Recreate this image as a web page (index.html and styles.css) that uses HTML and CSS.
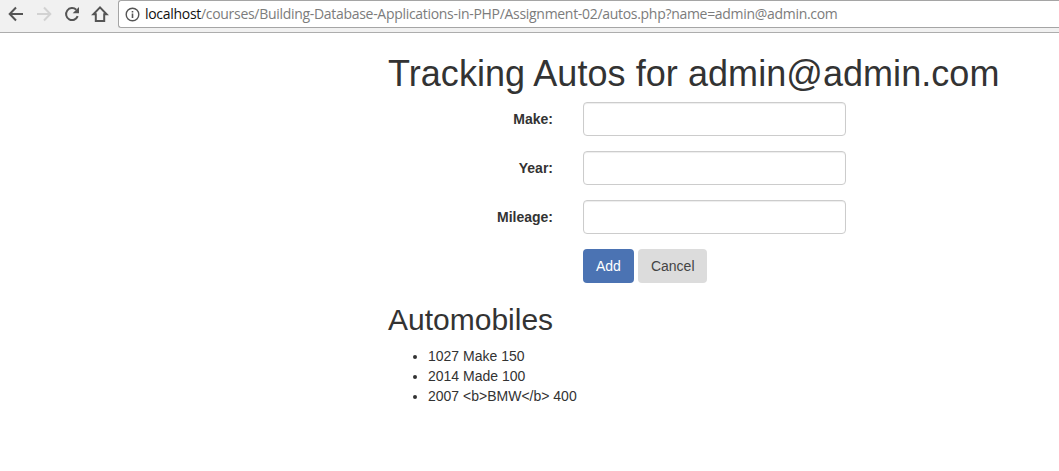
FILE: index.html
```html
<!DOCTYPE html>
<html lang="en">
<head>
<meta charset="utf-8">
<title>Automobile Tracker</title>
<link rel="stylesheet" href="styles.css">
</head>
<body>
<header class="toolbar">
  <svg class="nav-icons" width="118" height="32" viewBox="0 0 118 32" fill="none" stroke="#555" stroke-width="2">
    <path d="M23 14H10M16 7.500L9.700 14l6.300 6.500"/>
    <path stroke="#d2d2d2" d="M37 14h13M44 7.500l6.300 6.500-6.300 6.500"/>
    <path d="M77.700 16.200A6 6 0 1 1 76.300 9.800"/>
    <path fill="#555" stroke="none" d="M79 7v6.300h-6.300z"/>
    <path d="M100 7.400l-6.600 6.900H95.800V21h8.400V14.300h2.400z"/>
  </svg>
  <div class="address">
    <svg class="info" width="15" height="15" viewBox="0 0 15 15" fill="none" stroke="#555">
      <circle cx="7.500" cy="7.500" r="6.300" stroke-width="1.400"/>
      <path stroke-width="1.600" d="M7.500 6.600v4.400M7.500 3.900v1.600"/>
    </svg>
    <span class="url"><span class="host">localhost</span>/courses/Building-Database-Applications-in-PHP/Assignment-02/autos.php?name=admin@admin.com</span>
  </div>
</header>
<main class="container">
  <h1>Tracking Autos for admin@admin.com</h1>
  <form class="form">
    <div class="form-group"><label for="make">Make:</label><input class="control" id="make" type="text"></div>
    <div class="form-group"><label for="year">Year:</label><input class="control" id="year" type="text"></div>
    <div class="form-group"><label for="mileage">Mileage:</label><input class="control" id="mileage" type="text"></div>
    <div class="actions">
      <button class="btn btn-primary" type="button">Add</button>
      <button class="btn btn-default" type="button">Cancel</button>
    </div>
  </form>
  <h2>Automobiles</h2>
  <ul class="autos">
    <li>1027 Make 150</li>
    <li>2014 Made 100</li>
    <li>2007 &lt;b&gt;BMW&lt;/b&gt; 400</li>
  </ul>
</main>
</body>
</html>
```
FILE: styles.css
```css
* { box-sizing: border-box; }
body {
  margin: 0;
  background: #fff;
  color: #333;
  font: 14px/20px "Liberation Sans", Arial, sans-serif;
  overflow: hidden;
}
.toolbar {
  display: flex;
  height: 33px;
  background: #f1f1f1;
  border-bottom: 1px solid #adadad;
}
.nav-icons { flex: none; }
.address {
  display: flex;
  align-items: center;
  flex: 1;
  height: 28px;
  padding-left: 6px;
  background: #fff;
  border: 1px solid #a5a5a5;
  border-right: 0;
  border-radius: 3px 0 0 3px;
}
.info { flex: none; margin-right: 5px; }
.url {
  color: #7c7c7c;
  font: 14px/20px "Open Sans", "Noto Sans", sans-serif;
  letter-spacing: -0.3px;
  white-space: nowrap;
}
.host { color: #111; }
.container { padding: 21px 0 0 388px; }
h1, h2 { margin: 0; font-weight: 400; line-height: 1.1; white-space: nowrap; }
h1 { font-size: 36px; letter-spacing: 0.06px; }
h2 { margin-top: 20px; font-size: 30px; }
.form { padding-top: 8.400px; }
.form-group { display: flex; margin-bottom: 15px; }
.form-group label {
  width: 165px;
  margin-right: 30px;
  padding-top: 7px;
  text-align: right;
  font-weight: 700;
}
.control {
  width: 263px;
  height: 34px;
  padding: 6px 12px;
  background: #fff;
  border: 1px solid #ccc;
  border-radius: 4px;
  box-shadow: inset 0 1px 1px rgba(0, 0, 0, .075);
}
.actions { display: flex; gap: 4px; margin-left: 195px; }
.btn {
  height: 34px;
  padding: 6px 13px;
  border: 0;
  border-radius: 4px;
  font: 14px/20px "Liberation Sans", Arial, sans-serif;
}
.btn-primary { background: #4b73b3; color: #fff; }
.btn-default { padding-right: 12px; background: #dcdcdc; color: #444; }
.autos { margin: 10px 0; padding-left: 40px; }
```
